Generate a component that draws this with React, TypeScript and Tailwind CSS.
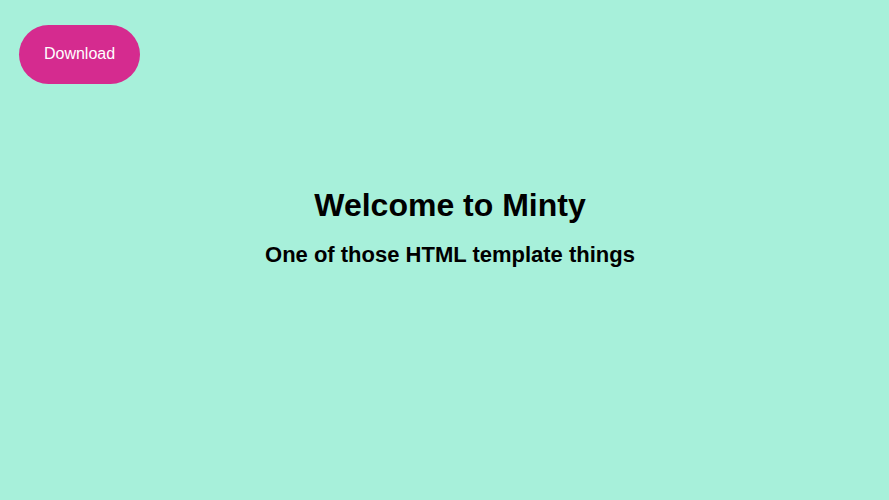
export default function App() {
  return (
    <div className="w-[889px] h-[500px] bg-[#a7f0da] flex flex-col pt-[25px] pl-[19px]" style={{ fontFamily: '"Liberation Sans", Arial, sans-serif' }}>
      <div>
        <button className="w-[121px] h-[59px] rounded-full bg-[#d52b8f] text-white text-[16px] leading-[18px] flex items-center justify-center pb-[2px]">
          Download
        </button>
      </div>
      <div className="flex flex-col items-center pr-[8px] text-black">
        <h1 className="mt-[103px] text-[32px] leading-[37px] font-bold">Welcome to Minty</h1>
        <h2 className="mt-[18px] text-[22px] leading-[25px] font-bold">One of those HTML template things</h2>
      </div>
    </div>
  );
}
